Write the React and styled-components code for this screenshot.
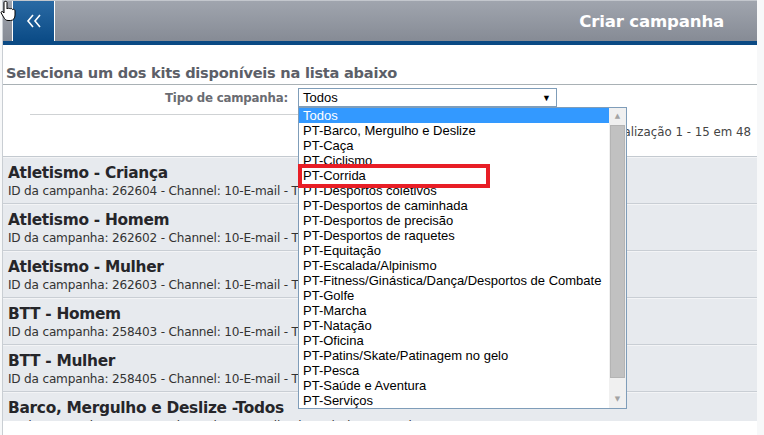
import React from "react";
import styled, { createGlobalStyle } from "styled-components";

const GlobalStyle = createGlobalStyle`
  html, body {
    margin: 0;
    padding: 0;
    background: #f7f8f9;
    overflow: hidden;
  }
  * { box-sizing: border-box; }
`;

const campaigns = [
  { title: "Atletismo - Criança", id: "262604" },
  { title: "Atletismo - Homem", id: "262602" },
  { title: "Atletismo - Mulher", id: "262603" },
  { title: "BTT - Homem", id: "258403" },
  { title: "BTT - Mulher", id: "258405" },
  { title: "Barco, Mergulho e Deslize -Todos", id: "258406" },
];

const options = [
  "Todos",
  "PT-Barco, Mergulho e Deslize",
  "PT-Caça",
  "PT-Ciclismo",
  "PT-Corrida",
  "PT-Desportos coletivos",
  "PT-Desportos de caminhada",
  "PT-Desportos de precisão",
  "PT-Desportos de raquetes",
  "PT-Equitação",
  "PT-Escalada/Alpinismo",
  "PT-Fitness/Ginástica/Dança/Desportos de Combate",
  "PT-Golfe",
  "PT-Marcha",
  "PT-Natação",
  "PT-Oficina",
  "PT-Patins/Skate/Patinagem no gelo",
  "PT-Pesca",
  "PT-Saúde e Aventura",
  "PT-Serviços",
];

const App = () => {
  return (
    <>
      <GlobalStyle />
      <Page>
        <Header>
          <BackButton>
            <svg width="18" height="16" viewBox="0 0 18 16">
              <path d="M8 2 L3 8 L8 14 M15 2 L10 8 L15 14" fill="none" stroke="#fff" strokeWidth="1.6" />
            </svg>
          </BackButton>
          <HeaderTitle>Criar campanha</HeaderTitle>
        </Header>
        <BlueBar />

        <Content>
          <Heading>Seleciona um dos kits disponíveis na lista abaixo</Heading>

          <FilterRow>
            <FilterLabel>Tipo de campanha:</FilterLabel>
            <SelectWrap>
              <SelectBox>
                <span>Todos</span>
                <Arrow>▼</Arrow>
              </SelectBox>
              <Dropdown>
                <OptionList>
                  {options.map((o, i) => (
                    <Option key={o} $active={i === 0}>{o}</Option>
                  ))}
                </OptionList>
                <ScrollBar>
                  <ScrollArrow>▲</ScrollArrow>
                  <Thumb />
                  <ScrollArrow>▼</ScrollArrow>
                </ScrollBar>
              </Dropdown>
              <Highlight />
            </SelectWrap>
          </FilterRow>
          <Rule />

          <Paging>Visualização 1 - 15 em 48</Paging>

          <List>
            {campaigns.map((c) => (
              <Item key={c.id}>
                <ItemTitle>{c.title}</ItemTitle>
                <ItemMeta>
                  ID da campanha: {c.id} - Channel: 10-E-mail - Tipo: Kit de campanha
                </ItemMeta>
              </Item>
            ))}
          </List>
        </Content>
      </Page>
      <Cursor>
        <svg width="18" height="22" viewBox="0 0 18 22">
          <path
            d="M5 1.5 C6 1 7 1.5 7 2.5 L7 9 C7.5 8 9.5 8 10 9 C10.5 8.3 12.3 8.4 12.6 9.6 C13.3 9 15 9.3 15 10.8 L15 15 C15 18 13.5 20.5 10.5 20.5 L8 20.5 C6 20.5 5 19.5 3.5 17 L1.2 13 C0.7 12 1.8 11 2.8 11.8 L4 13 L4 2.5 C4 2 4.5 1.5 5 1.5 Z"
            fill="#fff"
            stroke="#000"
            strokeWidth="1"
          />
        </svg>
      </Cursor>
    </>
  );
};

const Page = styled.div`
  margin-left: 2px;
  width: 755px;
  height: 435px;
  background: #fff;
  border-left: 1px solid #c9ced3;
  font-family: "DejaVu Sans", Tahoma, sans-serif;
  overflow: hidden;
`;

const Header = styled.div`
  height: 41px;
  display: flex;
  align-items: stretch;
  justify-content: space-between;
  padding-left: 9px;
  background: linear-gradient(#a0a5ae, #868b95);
  border-top: 1px solid #c3c7cd;
`;

const BackButton = styled.div`
  width: 43px;
  display: flex;
  align-items: center;
  justify-content: center;
  background: linear-gradient(#2a6aa4, #0b4b86);
  border-left: 1px solid #fff;
  border-right: 1px solid #fff;
`;

const HeaderTitle = styled.div`
  align-self: center;
  padding-right: 33px;
  color: #fff;
  font-weight: bold;
  font-size: 16.6px;
  letter-spacing: -0.2px;
`;

const BlueBar = styled.div`
  height: 4px;
  background: #0b4a84;
`;

const Content = styled.div`
  position: relative;
`;

const Heading = styled.h2`
  margin: 0;
  padding: 19px 0 3px 3px;
  font-size: 14.6px;
  font-weight: bold;
  letter-spacing: -0.25px;
  color: #5c5f68;
  border-bottom: 1px solid #a9b1b5;
`;

const FilterRow = styled.div`
  display: flex;
  align-items: center;
  gap: 10px;
  padding: 3px 0 0 0;
`;

const FilterLabel = styled.div`
  width: 285px;
  text-align: right;
  font-size: 11.8px;
  font-weight: bold;
  color: #6a6c72;
  letter-spacing: -0.2px;
`;

const SelectWrap = styled.div`
  position: relative;
`;

const SelectBox = styled.div`
  width: 259px;
  height: 19px;
  display: flex;
  align-items: center;
  justify-content: space-between;
  padding: 0 5px 0 4px;
  border: 1px solid #7f9db9;
  font-family: "Liberation Sans", Arial, sans-serif;
  font-size: 13px;
  color: #000;
`;

const Arrow = styled.span`
  font-size: 9px;
`;

const Dropdown = styled.div`
  position: absolute;
  top: 19px;
  left: 0;
  z-index: 5;
  width: 329px;
  height: 302px;
  display: flex;
  background: #fff;
  border: 1px solid #7f9db9;
`;

const OptionList = styled.div`
  flex: 1;
  font-family: "Liberation Sans", Arial, sans-serif;
  font-size: 13px;
  color: #000;
`;

const Option = styled.div`
  height: 15px;
  line-height: 15px;
  padding-left: 4px;
  white-space: nowrap;
  background: ${(p) => (p.$active ? "#3399ff" : "transparent")};
  color: ${(p) => (p.$active ? "#fff" : "#000")};
`;

const ScrollBar = styled.div`
  width: 17px;
  display: flex;
  flex-direction: column;
  align-items: center;
  background: #f0f0f0;
  padding: 0 1px;
`;

const ScrollArrow = styled.div`
  height: 17px;
  line-height: 17px;
  font-size: 7px;
  color: #a3a3a3;
`;

const Thumb = styled.div`
  width: 15px;
  flex: 0 0 253px;
  margin-bottom: auto;
  background: #c1c1c1;
  border: 1px solid #b4b4b4;
`;

const Highlight = styled.div`
  position: absolute;
  top: 76px;
  left: 0;
  z-index: 6;
  width: 192px;
  height: 24px;
  border: 4px solid #e81e26;
`;

const Rule = styled.div`
  margin: 7px 0 0 27px;
  width: 270px;
  height: 1px;
  background: #cfd2d4;
`;

const Paging = styled.div`
  text-align: right;
  padding: 10px 6px 0 0;
  height: 41px;
  font-size: 11.8px;
  color: #444;
`;

const List = styled.div`
  height: 265px;
  overflow: hidden;
  background: #e7eaee;
  border-top: 1px solid #c4cad0;
`;

const Item = styled.div`
  height: 47px;
  padding: 6px 0 0 5px;
  border-bottom: 1px solid #c9ced4;
  box-shadow: inset 0 1px 0 #f3f4f6;
`;

const ItemTitle = styled.div`
  font-size: 15.4px;
  font-weight: bold;
  color: #26262a;
  letter-spacing: -0.3px;
  line-height: 20px;
`;

const ItemMeta = styled.div`
  font-size: 12.1px;
  color: #333;
  letter-spacing: -0.2px;
  line-height: 17px;
  white-space: nowrap;
`;

const Cursor = styled.div`
  position: absolute;
  top: 0;
  left: 0;
  z-index: 10;
`;

export default App;
